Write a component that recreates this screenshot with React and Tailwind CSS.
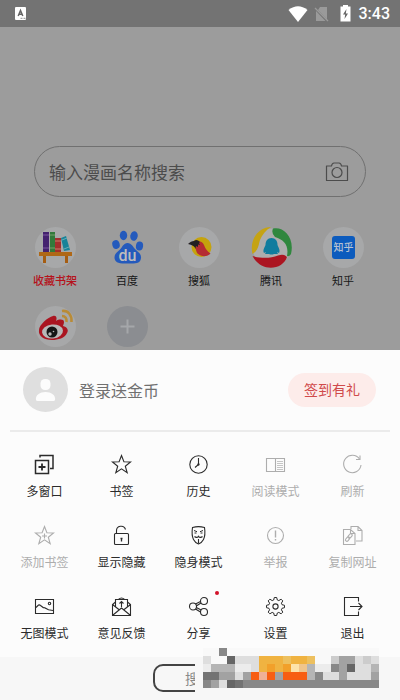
// src/App.jsx
import React, { useState } from 'react';

const StatusBar = () => (
  <header className="flex h-[27px] items-center bg-[#737373] pl-[14px] pr-[10px] text-white">
    <svg width="13" height="14" viewBox="0 0 13 14" aria-hidden="true">
      <rect x="1" y="0" width="11" height="13" rx="1" fill="#fff" />
      <path d="M4.200 9 L6.500 3.500 L8.800 9 M5 7.200 H8" fill="none" stroke="#666" strokeWidth="1.500" />
      <path d="M6.500 11.300h2M9.500 11.300h2" stroke="#737373" strokeWidth=".8" />
    </svg>
    <div className="ml-auto flex items-center">
      <svg width="20" height="16" viewBox="0 0 20 16" aria-hidden="true">
        <path d="M10 16 L0.5 4 Q10 -3.5 19.5 4 Z" fill="#fff" />
      </svg>
      <svg className="ml-[6px]" width="15" height="16" viewBox="0 0 15 16" aria-hidden="true">
        <path d="M6 1h7v12.500L4 4z M2 5l9.500 10H2z" fill="#9a9a9a" />
        <path d="M1 2l13 13" stroke="#9a9a9a" strokeWidth="1.2" />
      </svg>
      <svg className="ml-[11px]" width="11" height="17" viewBox="0 0 11 17" aria-hidden="true">
        <path d="M3 0h5v1.500h2.500v15H0.500v-15H3z" fill="#fff" />
        <path d="M6.500 4L3 9.500h2.200L4.500 14L8 8.500H5.800z" fill="#666" />
      </svg>
      <time className="ml-[8px] font-[Roboto,sans-serif] text-[16px] font-medium leading-5">3:43</time>
    </div>
  </header>
);

const CameraIcon = () => (
  <svg width="24" height="20" viewBox="0 0 24 20" fill="none" stroke="#4c4c4c" strokeWidth="1.2" aria-hidden="true">
    <path d="M1.500 4 H6.500 Q7 1 9 1 H14 Q16 1 16.500 4 H22.500 V18.500 H1.500 Z" strokeLinejoin="round" />
    <circle cx="12" cy="10.500" r="5" />
  </svg>
);

const SITE_ICONS = {
  shelf: (
    <>
      <circle cx="20.500" cy="20.500" r="20.500" fill="#a7a8a9" />
      <path d="M8 5h6v20H8z" fill="#44226f" />
      <path d="M8 8h6M8 21h6" stroke="#7a56a0" />
      <path d="M15 5h5v20h-5z" fill="#317a3b" />
      <path d="M15 8h5M15 21h5" stroke="#76a16d" />
      <path d="M20 11h6v14h-6z" fill="#a42e2d" />
      <path d="M20 14h6M20 22h6" stroke="#c77d6c" />
      <path d="M26 11l5-2 4 14-6 1z" fill="#178399" />
      <path d="M27 13l5-2M29 22l5-2" stroke="#69abb5" />
      <path d="M4 25h33v4H4z" fill="#af6817" />
      <path d="M8 29h3v7H8zM30 29h3v7h-3z" fill="#a55d12" />
    </>
  ),
  baidu: (
    <>
      <g fill="#245abc">
        <ellipse cx="9" cy="17.500" rx="3.700" ry="4.500" transform="rotate(-15 9 17.500)" />
        <ellipse cx="16.500" cy="8.500" rx="3.700" ry="4.700" />
        <ellipse cx="27" cy="9" rx="3.700" ry="4.900" transform="rotate(12 27 9)" />
        <ellipse cx="32.500" cy="19" rx="3.600" ry="4.500" transform="rotate(8 32.500 19)" />
        <path d="M20.500 16c4 0 5.500 4 8 6.500s6 4.500 5.500 8.500c-.5 5-4.500 6-13.500 5.500C12 37 7.500 35.500 7.500 30.500c0-4 3-5.500 5.500-8s3.500-6.500 7.500-6.500z" />
      </g>
      <text x="20.500" y="34" textAnchor="middle" fill="#bdbdbd" className="font-[Roboto,sans-serif] text-[16px] font-medium">du</text>
    </>
  ),
  sohu: (
    <>
      <circle cx="20.500" cy="20.500" r="20.500" fill="#a7a8a9" />
      <circle cx="22.500" cy="20" r="10" fill="#c5a30d" />
      <path d="M16 15c4-2 8 0 9 3 1.500 4 3 6 6.500 8.500-4 4-10 3-13 0-2.500-3-1-7-3.500-9z" fill="#b52c33" />
      <path d="M9 17c2-2 4-3 6-3 2-2 4-1 6 1l-1 1 1 2-2-.5 0 2.500-2-1-.5 3c-1-3-3.500-4-7.500-5z" fill="#231f22" />
    </>
  ),
  tencent: (
    <>
      <circle cx="20.500" cy="20.500" r="19" fill="#adadad" />
      <path d="M20 0C8 0-2 12 1.500 27 8 23 7.500 17 9 13 11 8 15 3 20 0z" fill="#c5a313" />
      <path d="M22 1.500C32-1 44 10 40 27q-2 3-4 2C38 18 33 13 24 10q-4-4-2-8.500z" fill="#30873e" />
      <path d="M1.500 29C12 32 20 31 27 28.500q6-2 9 1.500C32 43 10 46 1.500 29z" fill="#ab1521" />
      <path d="M20.500 11c4 0 6 3 6 7 1 3 3 5 1.500 8l-2-1 1 2h-4q-2.500 1-5 0h-4l1-2-2 1c-1.500-3 .5-5 1.500-8 0-4 2-7 6-7z" fill="#107c9e" />
    </>
  ),
  zhihu: (
    <>
      <circle cx="20.500" cy="20.500" r="20.500" fill="#a7a8a9" />
      <rect x="9" y="9" width="23" height="23" rx="3" fill="#0c5bbd" />
      <text x="20.500" y="24" textAnchor="middle" fill="#b7c2d2" className="text-[10px] font-medium">知乎</text>
    </>
  ),
  weibo: (
    <>
      <circle cx="20.500" cy="20.500" r="20.500" fill="#a7a8a9" />
      <path d="M18 10c4-1 4 3 3 5 3-2 8-2 8 1 0 2-1 3-1 4 4 1 6 4 4 7-2 5-9 7-15 7C9 34 3 30 4 24c0-5 9-13 14-14z" fill="#aa1521" />
      <ellipse cx="17.500" cy="25.500" rx="10.500" ry="7" fill="#b8b8b8" transform="rotate(-6 17.500 25.500)" />
      <circle cx="17" cy="26" r="5.500" fill="#151515" />
      <circle cx="15" cy="28" r="1.700" fill="#b8b8b8" />
      <circle cx="18.500" cy="25.500" r=".8" fill="#b8b8b8" />
      <path d="M27 5c6-1 10 4 9.500 11M27 10c3 0 5 2 4.500 6" fill="none" stroke="#b98b36" strokeWidth="2.600" />
    </>
  ),
  add: (
    <>
      <circle cx="20.500" cy="20.500" r="20.500" fill="#8b8d91" />
      <path d="M20.500 13.500v14M13.500 20.500h14" stroke="#a5a7aa" strokeWidth="2" />
    </>
  ),
};

const SITES = [
  { icon: 'shelf', label: '收藏书架', active: true },
  { icon: 'baidu', label: '百度' },
  { icon: 'sohu', label: '搜狐' },
  { icon: 'tencent', label: '腾讯' },
  { icon: 'zhihu', label: '知乎' },
];

const MORE_SITES = [
  { icon: 'weibo', name: 'weibo' },
  { icon: 'add', name: 'add' },
];

const SiteIcon = ({ icon }) => (
  <svg width="41" height="41" viewBox="0 0 41 41" aria-hidden="true">
    {SITE_ICONS[icon]}
  </svg>
);

const MENU_ICONS = {
  windows: (
    <>
      <path d="M7 4.500V2.500h13v13h-3" strokeWidth="1.500" />
      <path d="M2.500 7.500h13v13h-13z" strokeWidth="1.500" />
      <path d="M9 10.500v7M5.500 14h7" strokeWidth="1.800" />
    </>
  ),
  star: <path d="M11.500 2.500l2.400 6.300 6.600.2-5.200 4.200 1.900 6.600-5.700-3.900-5.700 3.900 1.900-6.600L2.500 9l6.600-.2z" />,
  clock: (
    <>
      <circle cx="11.500" cy="11.500" r="8.700" />
      <path d="M11.500 5v6.500l-3.500 3" />
      <circle cx="11.500" cy="11.500" r=".6" />
    </>
  ),
  reader: (
    <>
      <path d="M2.500 5.500h18v13h-18zM11.500 5.500v13" />
      <path d="M13 8.500h6M13 10.500h6M13 12.500h6M13 14.500h6M13 16.500h6" strokeWidth=".7" />
    </>
  ),
  refresh: (
    <>
      <path d="M18.500 6a8.700 8.700 0 1 0 1.500 6" />
      <path d="M19 2.500v4h-4" />
    </>
  ),
  starPlus: (
    <>
      <path d="M11.500 2.500l2.400 6.300 6.600.2-5.200 4.200 1.900 6.600-5.700-3.900-5.700 3.900 1.900-6.600L2.500 9l6.600-.2z" />
      <path d="M11.500 9.500v5M9 12h5" />
    </>
  ),
  lock: (
    <>
      <rect x="4.500" y="9.500" width="14" height="11" rx="1" />
      <path d="M6.500 9.500V7a4.600 4.600 0 0 1 9-1.500" />
      <path d="M11.500 14v3.500M10.500 14.500h2" strokeWidth="1.300" />
    </>
  ),
  mask: (
    <>
      <path d="M5.500 3.500Q11.500 1.800 17.500 3.500c.6 4 .5 9-1 12-1.300 2.500-3.500 4-5 4.500-1.500-.5-3.700-2-5-4.500-1.500-3-1.600-8-1-12z" />
      <path d="M7 6.500l3 1.200M16 6.500l-3 1.200M7.500 9h2M13.500 9h2" strokeWidth="1" />
      <path d="M7.500 12.500c1.500 1.500 3 1 4-.2 1 1.200 2.500 1.700 4 .2" strokeWidth="1.200" />
      <path d="M11.500 15v4.500" />
    </>
  ),
  report: (
    <>
      <circle cx="11.500" cy="11.500" r="8" />
      <path d="M11.500 6.500v7" strokeWidth="1.400" />
      <path d="M11.500 15v1.500" strokeWidth="1.400" />
    </>
  ),
  copy: (
    <>
      <path d="M10 5V2.500h7l4 4V17h-6M17 2.500v4h4" />
      <path d="M2.500 5.500h7l4.500 4v11H2.500zM9.500 5.500v4H14" />
      <rect x="6.700" y="10.700" width="2.800" height="5" rx="1.400" transform="rotate(40 8.100 13.200) translate(0 -1.600)" />
      <rect x="6.700" y="10.700" width="2.800" height="5" rx="1.400" transform="rotate(40 8.100 13.200) translate(0 2.400)" />
    </>
  ),
  picture: (
    <>
      <path d="M2.500 4.500h18v14h-18z" />
      <path d="M3 12.500l2.500-2.500q1-.5 2 .5l2 1.500q1 1 2 .7l4 2 4.500.8" />
      <circle cx="16.500" cy="8.500" r="1.200" />
    </>
  ),
  mail: (
    <>
      <path d="M5.500 12V4.500h12V12M8.500 4.500q3-3 6 0" />
      <path d="M5.500 7L2.500 9.500v11h18v-11l-3-2.500M2.500 9.500l7 5.500M20.500 9.500l-7 5.500M3 20l8.500-7 8.500 7" />
      <path d="M11.500 12v-5M9.500 8.500l2-2 2 2" />
    </>
  ),
  share: (
    <>
      <circle cx="6" cy="11.500" r="3.500" />
      <circle cx="17" cy="6" r="3.500" />
      <circle cx="17" cy="17" r="3.500" />
      <path d="M8.500 9L13.500 6.500M9.300 11L14 8M9.300 12.500l4.900 2.500M8.500 14l5 3" />
    </>
  ),
  gear: (
    <>
      <path
        d="M10.300 2.500h2.400l.6 2.500 1.500.6 2.300-1.400 1.700 1.700-1.400 2.300.6 1.500 2.500.6v2.400l-2.500.6-.6 1.500 1.400 2.300-1.700 1.700-2.300-1.400-1.500.6-.6 2.500h-2.400l-.6-2.500-1.500-.6-2.300 1.400-1.700-1.700 1.400-2.300-.6-1.500-2.500-.6v-2.400l2.500-.6.6-1.500-1.400-2.300 1.700-1.700 2.300 1.400 1.500-.6z"
        strokeWidth="1"
      />
      <circle cx="11.500" cy="11.500" r="2.600" />
    </>
  ),
  exit: (
    <>
      <path d="M17.500 6.500v-4h-14v18h14v-4" />
      <path d="M9 11.500h12M17.500 8l3.500 3.500-3.500 3.500" />
    </>
  ),
};

const MENU = [
  { icon: 'windows', label: '多窗口' },
  { icon: 'star', label: '书签' },
  { icon: 'clock', label: '历史' },
  { icon: 'reader', label: '阅读模式', disabled: true },
  { icon: 'refresh', label: '刷新', disabled: true },
  { icon: 'starPlus', label: '添加书签', disabled: true },
  { icon: 'lock', label: '显示隐藏' },
  { icon: 'mask', label: '隐身模式' },
  { icon: 'report', label: '举报', disabled: true },
  { icon: 'copy', label: '复制网址', disabled: true },
  { icon: 'picture', label: '无图模式' },
  { icon: 'mail', label: '意见反馈' },
  { icon: 'share', label: '分享', dot: true },
  { icon: 'gear', label: '设置' },
  { icon: 'exit', label: '退出' },
];

const MenuItem = ({ icon, label, disabled, dot }) => (
  <button
    type="button"
    disabled={disabled}
    className="relative flex h-[71px] flex-col items-center text-[#2b2b2b] disabled:text-[#adadad]"
  >
    <svg width="23" height="23" viewBox="0 0 23 23" fill="none" stroke="currentColor" strokeWidth="1.100" aria-hidden="true">
      {MENU_ICONS[icon]}
    </svg>
    <span className="mt-[7px] text-[12px] leading-4">{label}</span>
    {dot && <span className="absolute right-[18px] -top-1 size-1 rounded-full bg-[#d3122a]" />}
  </button>
);

// '.' is an empty cell
const MOSAIC_COLORS = {
  a: '#666', b: '#737373', c: '#888', d: '#a2a2a2', e: '#b5b5b5', f: '#ccc',
  g: '#dedede', h: '#ececec', o: '#f0b341', p: '#f2a02a', q: '#edc05f',
  r: '#f75e12', s: '#efb096', t: '#fde3aa', u: '#f0c58c',
};

const MOSAIC = [
  '..c...................',
  'g..agggoooqooq..fddgfg',
  'heeehhgopoptuehhcdagge',
  'bbddgdrsrdrrrecggdgggd',
  'cdgabccccccccccccccccc',
];

const Mosaic = () => (
  <svg className="mt-[-9px] ml-[8px] shrink-0" width="176" height="40" viewBox="0 0 176 40" shapeRendering="crispEdges" aria-hidden="true">
    <rect width="176" height="40" fill="#f9f9f9" />
    {MOSAIC.map((row, y) =>
      [...row].map((cell, x) =>
        cell === '.' ? null : (
          <rect key={`${x}-${y}`} x={x * 8} y={y * 8} width="8" height="8" fill={MOSAIC_COLORS[cell]} />
        )
      )
    )}
  </svg>
);

const App = () => {
  const [query, setQuery] = useState('');

  return (
    <div className="bg-[#9c9c9c] font-['Noto_Sans_CJK_SC',sans-serif]">
      <StatusBar />

      <main className="pt-[119px]">
        <form
          onSubmit={(e) => e.preventDefault()}
          className="mx-[34px] flex h-[51px] items-center rounded-full border border-[#707070] pl-[14px] pr-[16px]"
        >
          <input
            type="text"
            aria-label="输入漫画名称搜索"
            value={query}
            onChange={(e) => setQuery(e.target.value)}
            placeholder="输入漫画名称搜索"
            className="min-w-0 flex-1 bg-transparent text-[17px] leading-6 text-[#444] outline-none placeholder:text-[#4c4c4c]"
          />
          <button type="button" aria-label="camera">
            <CameraIcon />
          </button>
        </form>

        <nav className="mt-[30px] grid grid-cols-5 pl-[19px] pr-[21px]">
          {SITES.map((site) => (
            <a key={site.label} href="#" className="flex h-[79px] flex-col items-center">
              <SiteIcon icon={site.icon} />
              <span className={site.active ? 'mt-1 text-[11px] font-medium leading-4 text-[#b5121b]' : 'mt-1 text-[11px] leading-4 text-[#161616]'}>
                {site.label}
              </span>
            </a>
          ))}
          {MORE_SITES.map((site) => (
            <a key={site.name} href="#" aria-label={site.name} className="flex h-[44px] justify-center">
              <SiteIcon icon={site.icon} />
            </a>
          ))}
        </nav>
      </main>

      <section className="bg-[#fcfcfc]">
        <div className="flex h-[79px] items-center pl-[23px] pr-[24px]">
          <svg width="45" height="45" viewBox="0 0 45 45" aria-hidden="true">
            <circle cx="22.500" cy="22.500" r="22.500" fill="#dfdfdf" />
            <rect x="17.500" y="12" width="10" height="11" rx="4.500" fill="#fcfcfc" />
            <path d="M13 33c-1-5 4-8 9.500-8s10.500 3 9.500 8q-.3 1-1.500 1h-16q-1.200 0-1.500-1z" fill="#fcfcfc" />
          </svg>
          <span className="ml-[11px] text-[16px] leading-6 text-[#707070]">登录送金币</span>
          <button type="button" className="ml-auto h-[34px] rounded-full bg-[#fdecea] px-4 text-[14px] text-[#d04a4a]">
            签到有礼
          </button>
        </div>
        <hr className="mx-[10px] mt-px border-t-2 border-[#ebebeb]" />
        <div className="grid grid-cols-5 pl-[6px] pr-[9px] pt-[21px]">
          {MENU.map((item) => (
            <MenuItem key={item.label} {...item} />
          ))}
        </div>
      </section>

      <footer className="-mt-[9px] flex h-[43px] bg-[#f7f7f7]">
        <div className="ml-[153px] mt-[7px] w-[42px] shrink-0 overflow-hidden">
          <button type="button" className="h-[28px] w-[94px] rounded-[10px] border-2 border-[#444] pl-[30px] text-left text-[14px] leading-6 text-[#888]">
            搜
          </button>
        </div>
        <Mosaic />
      </footer>
    </div>
  );
};

export default App;
